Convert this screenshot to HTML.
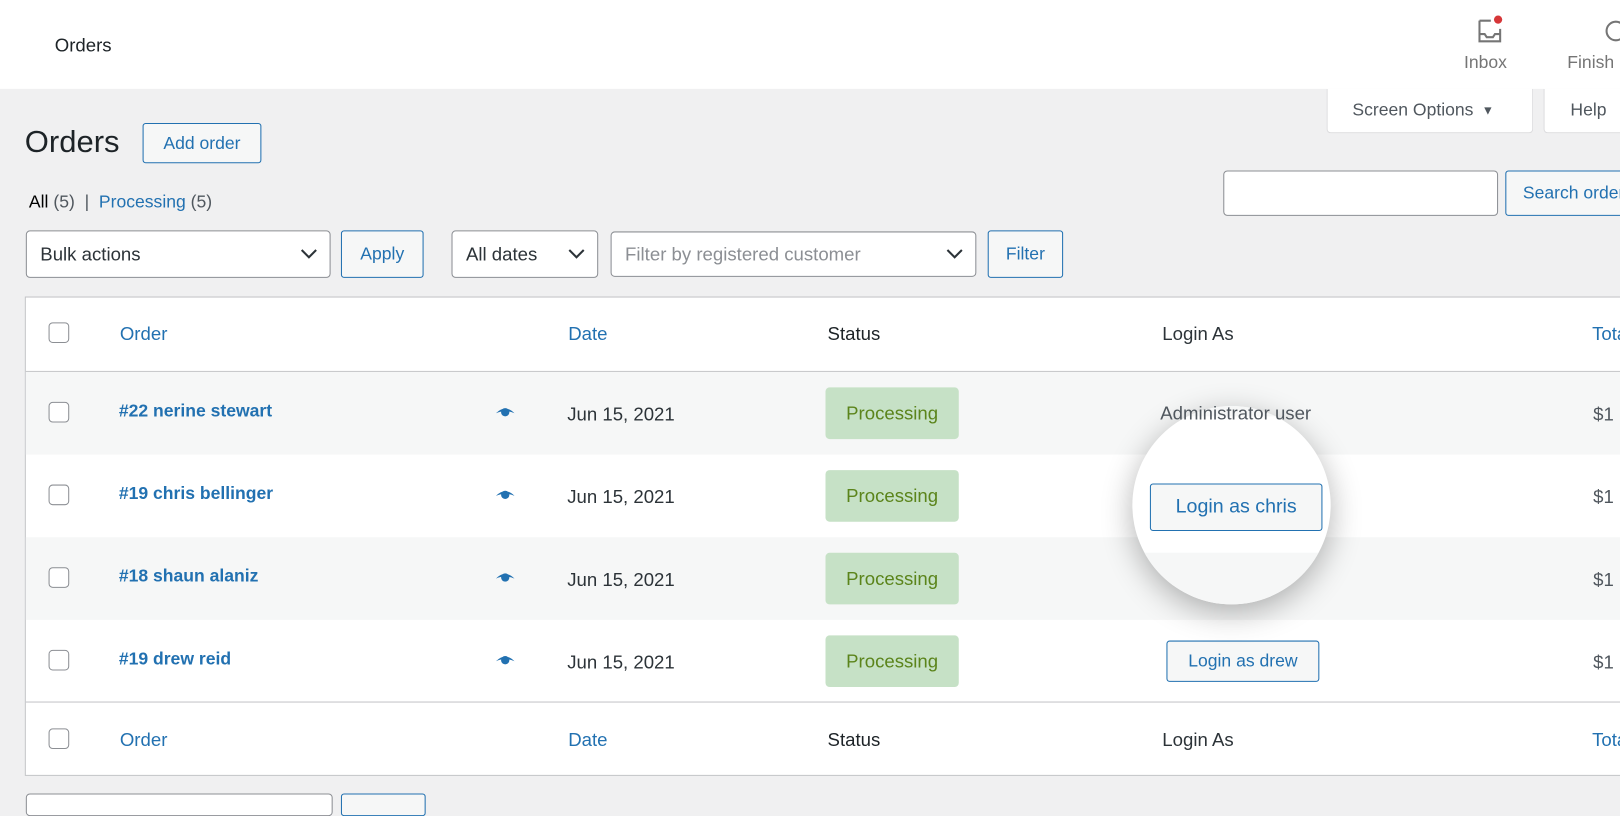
<!DOCTYPE html>
<html><head><meta charset="utf-8"><style>
html,body{margin:0;padding:0;width:1620px;height:800px;overflow:hidden;background:#f0f0f1;}
#w{position:absolute;left:0;top:0;width:1568px;height:775px;transform:scale(1.03316);transform-origin:0 0;font-family:"Liberation Sans",sans-serif;color:#1d2327;}
.a{position:absolute;}
.hdr{left:0;top:0;width:1568px;height:86px;background:#fff;}
.btn{position:absolute;box-sizing:border-box;border:1px solid #2271b1;border-radius:3px;background:#f6f7f7;color:#2271b1;font-size:17px;display:flex;align-items:center;justify-content:center;}
.sel{position:absolute;box-sizing:border-box;border:1px solid #8c8f94;border-radius:4px;background:#fff;font-size:18px;display:flex;align-items:center;padding-left:13px;color:#2c3338;}
.sel svg{position:absolute;right:12px;top:50%;margin-top:-5px;}
.tab{position:absolute;box-sizing:border-box;background:#fff;border:1px solid #dcdcde;border-top:none;border-radius:0 0 4px 4px;font-size:17px;color:#50575e;display:flex;align-items:center;}
.tbl{left:24px;top:287px;width:1560px;height:464px;background:#fff;border:1px solid #c3c4c7;box-sizing:border-box;}
.row{position:absolute;left:0;width:1560px;height:80px;}
.cb{position:absolute;left:22px;width:20px;height:20px;border:1px solid #8c8f94;border-radius:4px;background:#fff;box-sizing:border-box;}
.t{position:absolute;font-size:18px;white-space:nowrap;}
.lnk{color:#2271b1;}
.badge{position:absolute;left:774px;width:129px;height:50px;background:#c6e1c6;color:#5b841b;border-radius:4px;font-size:18px;display:flex;align-items:center;justify-content:center;}
</style></head><body><div id="w">
<div class="a hdr"></div>
<div class="t" style="left:53px;top:34px;font-size:18px;color:#1d2327;">Orders</div>
<svg class="a" style="left:1428px;top:14px" width="28" height="30" viewBox="0 0 28 30"><path d="M4 6h11M4 6v20h20V14M4 19h5l2 3h6l2-3h5" fill="none" stroke="#757575" stroke-width="2"/><circle cx="22" cy="5" r="4" fill="#d63638"/></svg>
<div class="t" style="left:1417px;top:51px;font-size:17px;color:#757575">Inbox</div>
<svg class="a" style="left:1552px;top:18px" width="20" height="24"><circle cx="12" cy="12" r="9" fill="none" stroke="#757575" stroke-width="2"/></svg>
<div class="t" style="left:1517px;top:51px;font-size:17px;color:#757575">Finish</div>
<div class="tab" style="left:1284px;top:86px;width:200px;height:43px;padding-left:24px">Screen Options <span style="font-size:12px;margin-left:8px">▼</span></div>
<div class="tab" style="left:1494px;top:86px;width:90px;height:43px;padding-left:25px">Help</div>
<div class="t" style="left:24px;top:121px;font-size:30px;color:#1d2327">Orders</div>
<div class="btn" style="left:138px;top:119px;width:115px;height:39px">Add order</div>
<div class="t" style="left:28px;top:186px;font-size:17px;color:#50575e"><span style="color:#000">All</span> (5) &nbsp;| &nbsp;<span class="lnk">Processing</span> (5)</div>
<div class="a" style="left:1184px;top:165px;width:266px;height:44px;box-sizing:border-box;border:1px solid #8c8f94;border-radius:4px;background:#fff"></div>
<div class="btn" style="left:1457px;top:165px;width:130px;height:44px;justify-content:flex-start;padding-left:16px">Search orders</div>
<div class="sel" style="left:25px;top:223px;width:295px;height:46px">Bulk actions<svg width="16" height="10"><path d="M1 1l7 7 7-7" fill="none" stroke="#2c3338" stroke-width="2"/></svg></div>
<div class="btn" style="left:330px;top:223px;width:80px;height:46px">Apply</div>
<div class="sel" style="left:437px;top:223px;width:142px;height:46px">All dates<svg width="16" height="10"><path d="M1 1l7 7 7-7" fill="none" stroke="#2c3338" stroke-width="2"/></svg></div>
<div class="sel" style="left:591px;top:224px;width:354px;height:44px;color:#8c8f94">Filter by registered customer<svg width="16" height="10"><path d="M1 1l7 7 7-7" fill="none" stroke="#2c3338" stroke-width="2"/></svg></div>
<div class="btn" style="left:956px;top:223px;width:73px;height:46px">Filter</div>

<div class="a tbl">
 <div class="row" style="top:0;height:71px;border-bottom:1px solid #c3c4c7">
  <div class="cb" style="top:24px"></div>
  <div class="t lnk" style="left:91px;top:25px">Order</div>
  <div class="t lnk" style="left:525px;top:25px">Date</div>
  <div class="t" style="left:776px;top:25px">Status</div>
  <div class="t" style="left:1100px;top:25px;color:#2c3338">Login As</div>
  <div class="t lnk" style="left:1516px;top:25px">Total</div>
 </div>
 <div class="row" style="top:72px;background:#f6f7f7">
  <div class="cb" style="top:29px"></div>
  <div class="t lnk" style="left:90px;top:28px;font-weight:bold;font-size:17px">#22 nerine stewart</div>
  <svg class="a" style="left:454px;top:33px" width="20" height="12"><path d="M1 7Q10-2 19 7Q10 3 1 7z" fill="#2271b1"/><circle cx="10" cy="6" r="4" fill="#2271b1"/></svg>
  <div class="t" style="left:524px;top:31px;color:#2c3338">Jun 15, 2021</div>
  <div class="badge" style="top:15px">Processing</div>
  <div class="t" style="left:1517px;top:31px;color:#50575e">$1</div>
 </div>
 <div class="row" style="top:152px">
  <div class="cb" style="top:29px"></div>
  <div class="t lnk" style="left:90px;top:28px;font-weight:bold;font-size:17px">#19 chris bellinger</div>
  <svg class="a" style="left:454px;top:33px" width="20" height="12"><path d="M1 7Q10-2 19 7Q10 3 1 7z" fill="#2271b1"/><circle cx="10" cy="6" r="4" fill="#2271b1"/></svg>
  <div class="t" style="left:524px;top:31px;color:#2c3338">Jun 15, 2021</div>
  <div class="badge" style="top:15px">Processing</div>
  <div class="t" style="left:1517px;top:31px;color:#50575e">$1</div>
 </div>
 <div class="row" style="top:232px;background:#f6f7f7">
  <div class="cb" style="top:29px"></div>
  <div class="t lnk" style="left:90px;top:28px;font-weight:bold;font-size:17px">#18 shaun alaniz</div>
  <svg class="a" style="left:454px;top:33px" width="20" height="12"><path d="M1 7Q10-2 19 7Q10 3 1 7z" fill="#2271b1"/><circle cx="10" cy="6" r="4" fill="#2271b1"/></svg>
  <div class="t" style="left:524px;top:31px;color:#2c3338">Jun 15, 2021</div>
  <div class="badge" style="top:15px">Processing</div>
  <div class="t" style="left:1517px;top:31px;color:#50575e">$1</div>
 </div>
 <div class="row" style="top:312px">
  <div class="cb" style="top:29px"></div>
  <div class="t lnk" style="left:90px;top:28px;font-weight:bold;font-size:17px">#19 drew reid</div>
  <svg class="a" style="left:454px;top:33px" width="20" height="12"><path d="M1 7Q10-2 19 7Q10 3 1 7z" fill="#2271b1"/><circle cx="10" cy="6" r="4" fill="#2271b1"/></svg>
  <div class="t" style="left:524px;top:31px;color:#2c3338">Jun 15, 2021</div>
  <div class="badge" style="top:15px">Processing</div>
  <div class="btn" style="left:1104px;top:20px;width:148px;height:40px">Login as drew</div>
  <div class="t" style="left:1517px;top:31px;color:#50575e">$1</div>
 </div>
 <div class="row" style="top:391px;height:72px;border-top:1px solid #c3c4c7">
  <div class="cb" style="top:25px"></div>
  <div class="t lnk" style="left:91px;top:26px">Order</div>
  <div class="t lnk" style="left:525px;top:26px">Date</div>
  <div class="t" style="left:776px;top:26px">Status</div>
  <div class="t" style="left:1100px;top:26px;color:#2c3338">Login As</div>
  <div class="t lnk" style="left:1516px;top:26px">Total</div>
 </div>
</div>
<div class="a" style="left:1096px;top:393px;width:192px;height:192px;border-radius:50%;background:#fff;box-shadow:0 8px 30px rgba(0,0,0,.3);overflow:hidden">
 <div class="a" style="left:0;top:0;width:192px;height:10px;background:#f6f7f7"></div>
 <div class="a" style="left:0;top:142px;width:192px;height:60px;background:#f6f7f7"></div>
 <div class="btn" style="left:17px;top:75px;width:167px;height:46px;font-size:19px">Login as chris</div>
</div>
<div class="t" style="left:1123px;top:390px;color:#50575e;z-index:5">Administrator user</div>
<div class="a" style="left:25px;top:768px;width:295px;height:20px;border:1px solid #8c8f94;border-radius:4px;background:#fff"></div>
<div class="a" style="left:330px;top:768px;width:80px;height:20px;border:1px solid #2271b1;border-radius:3px;background:#f6f7f7"></div>
</div></body></html>
